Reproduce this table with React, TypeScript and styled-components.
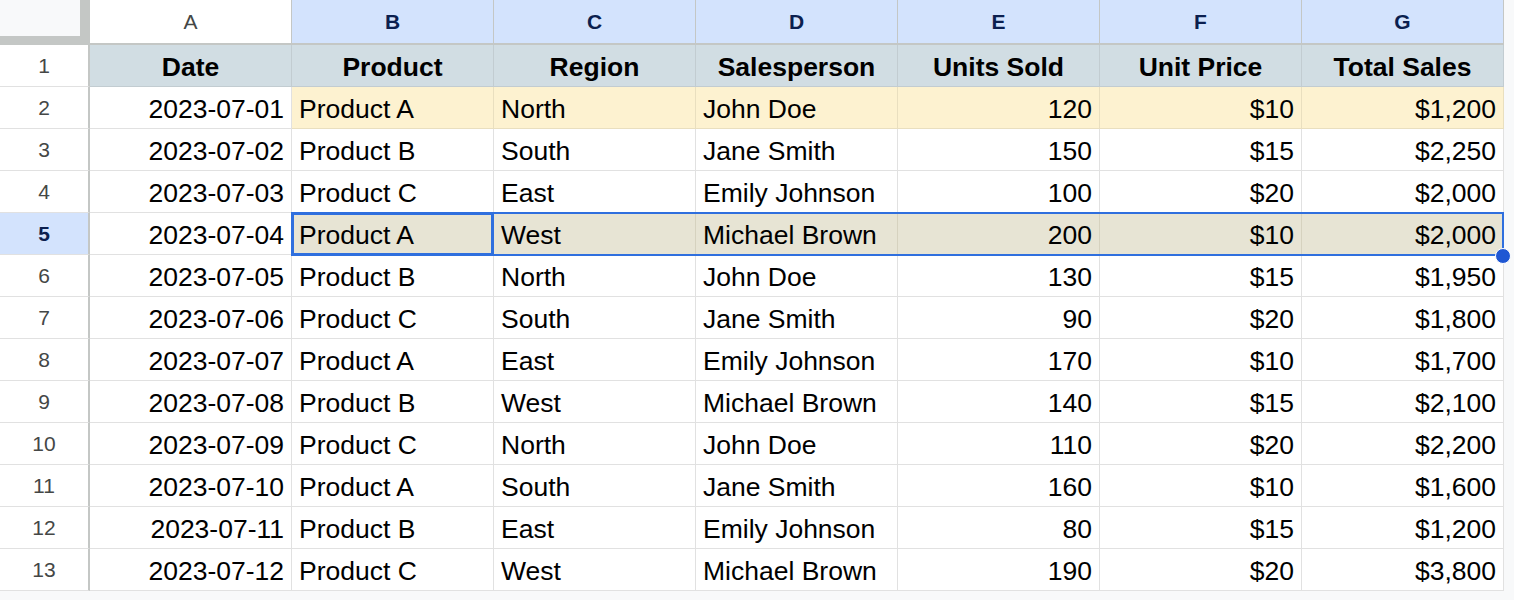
import React from "react";
import styled, { createGlobalStyle, css } from "styled-components";

const Global = createGlobalStyle`
  html, body { margin: 0; padding: 0; background: #f8f9fa; }
  body { font-family: "Liberation Sans", Arial, sans-serif; }
  * { box-sizing: border-box; }
`;

const Page = styled.div`
  width: 1514px;
  height: 600px;
  overflow: hidden;
  background: #f8f9fa;
`;

const SheetWrap = styled.div`
  position: relative;
  width: 1504px;
  background: #ffffff;
`;

const Grid = styled.div`
  display: grid;
  grid-template-columns: 90px repeat(7, 202px);
  grid-template-rows: 45px repeat(13, 42px);
`;

const Corner = styled.div`
  background: #f8f9fa;
  border-right: 10px solid #c4c7c5;
  border-bottom: 9px solid #c4c7c5;
`;

const ColHead = styled.div<{ $sel?: boolean }>`
  display: flex;
  align-items: center;
  justify-content: center;
  font-size: 21px;
  border-right: 1px solid #c4c7c5;
  border-bottom: 2px solid #c4c7c5;
  background: ${(p) => (p.$sel ? "#d3e3fd" : "#ffffff")};
  color: ${(p) => (p.$sel ? "#0b1f4f" : "#444746")};
  font-weight: ${(p) => (p.$sel ? 700 : 400)};
  padding-top: 1px;
`;

const RowHead = styled.div<{ $sel?: boolean }>`
  display: flex;
  align-items: center;
  justify-content: center;
  font-size: 21px;
  padding-top: 1px;
  border-right: 2px solid #c4c7c5;
  border-bottom: 1px solid #e1e1e1;
  background: ${(p) => (p.$sel ? "#d3e3fd" : "#ffffff")};
  color: ${(p) => (p.$sel ? "#0b1f4f" : "#444746")};
  font-weight: ${(p) => (p.$sel ? 700 : 400)};
`;

type Tone = "plain" | "head" | "yellow" | "selected";

const toneBg: Record<Tone, string> = {
  plain: "#ffffff",
  head: "#d1dde3",
  yellow: "#fdf2d0",
  selected: "#e7e4d4",
};

const toneLine: Record<Tone, string> = {
  plain: "#e1e1e1",
  head: "#c2ccd1",
  yellow: "#e9dfbf",
  selected: "#d6d2bf",
};

const Cell = styled.div<{ $tone: Tone; $align: "left" | "right" | "center" }>`
  display: flex;
  align-items: center;
  padding: 4px 7px 0 7px;
  font-size: 26.5px;
  color: #000000;
  white-space: nowrap;
  overflow: hidden;
  background: ${(p) => toneBg[p.$tone]};
  border-right: 1px solid ${(p) => toneLine[p.$tone]};
  border-bottom: 1px solid ${(p) => toneLine[p.$tone]};
  justify-content: ${(p) =>
    p.$align === "left" ? "flex-start" : p.$align === "right" ? "flex-end" : "center"};
  ${(p) =>
    p.$tone === "head" &&
    css`
      font-weight: 700;
    `}
`;

const RangeBox = styled.div`
  position: absolute;
  left: 291px;
  top: 212px;
  width: 1213px;
  height: 44px;
  border: 2px solid #2f6fde;
  pointer-events: none;
`;

const ActiveBox = styled.div`
  position: absolute;
  left: 291px;
  top: 212px;
  width: 203px;
  height: 44px;
  border: 3px solid #2f6fde;
  pointer-events: none;
`;

const FillHandle = styled.div`
  position: absolute;
  left: 1495px;
  top: 248px;
  width: 16px;
  height: 16px;
  border-radius: 50%;
  background: #1f57d3;
  border: 1.5px solid #ffffff;
`;

const cols = ["A", "B", "C", "D", "E", "F", "G"];
const headers = ["Date", "Product", "Region", "Salesperson", "Units Sold", "Unit Price", "Total Sales"];
const aligns: ("left" | "right")[] = ["right", "left", "left", "left", "right", "right", "right"];

const data: string[][] = [
  ["2023-07-01", "Product A", "North", "John Doe", "120", "$10", "$1,200"],
  ["2023-07-02", "Product B", "South", "Jane Smith", "150", "$15", "$2,250"],
  ["2023-07-03", "Product C", "East", "Emily Johnson", "100", "$20", "$2,000"],
  ["2023-07-04", "Product A", "West", "Michael Brown", "200", "$10", "$2,000"],
  ["2023-07-05", "Product B", "North", "John Doe", "130", "$15", "$1,950"],
  ["2023-07-06", "Product C", "South", "Jane Smith", "90", "$20", "$1,800"],
  ["2023-07-07", "Product A", "East", "Emily Johnson", "170", "$10", "$1,700"],
  ["2023-07-08", "Product B", "West", "Michael Brown", "140", "$15", "$2,100"],
  ["2023-07-09", "Product C", "North", "John Doe", "110", "$20", "$2,200"],
  ["2023-07-10", "Product A", "South", "Jane Smith", "160", "$10", "$1,600"],
  ["2023-07-11", "Product B", "East", "Emily Johnson", "80", "$15", "$1,200"],
  ["2023-07-12", "Product C", "West", "Michael Brown", "190", "$20", "$3,800"],
];

export default function App() {
  return (
    <Page>
      <Global />
      <SheetWrap>
        <Grid>
          <Corner />
          {cols.map((c, i) => (
            <ColHead key={c} $sel={i > 0}>
              {c}
            </ColHead>
          ))}
          <RowHead>1</RowHead>
          {headers.map((h) => (
            <Cell key={h} $tone="head" $align="center">
              {h}
            </Cell>
          ))}
          {data.map((row, r) => {
            const rowNum = r + 2;
            return (
              <React.Fragment key={rowNum}>
                <RowHead $sel={rowNum === 5}>{rowNum}</RowHead>
                {row.map((v, c) => {
                  let tone: Tone = "plain";
                  if (c > 0 && rowNum === 2) tone = "yellow";
                  if (c > 0 && rowNum === 5) tone = "selected";
                  return (
                    <Cell key={c} $tone={tone} $align={aligns[c]}>
                      {v}
                    </Cell>
                  );
                })}
              </React.Fragment>
            );
          })}
        </Grid>
        <RangeBox />
        <ActiveBox />
        <FillHandle />
      </SheetWrap>
    </Page>
  );
}
